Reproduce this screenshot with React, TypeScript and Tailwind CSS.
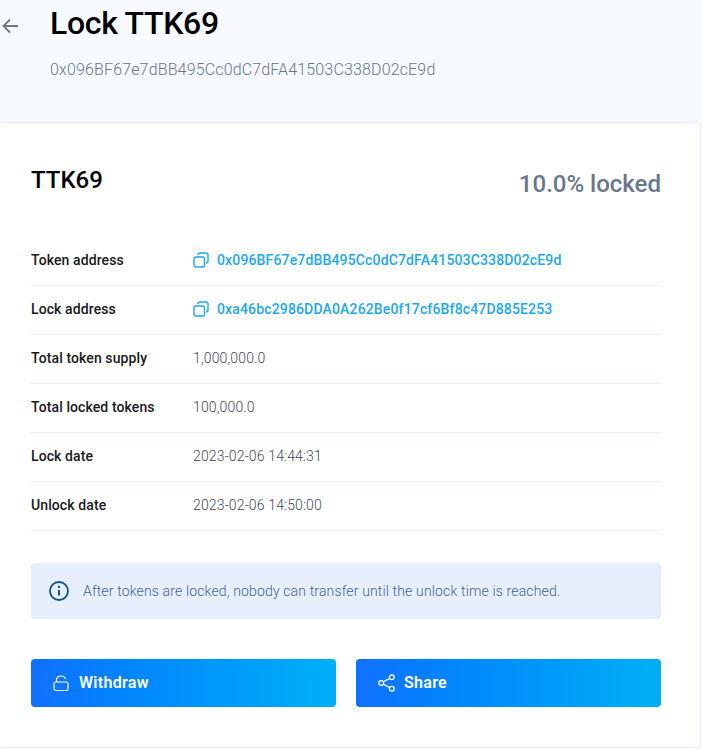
const rows = [
  { label: "Token address", value: "0x096BF67e7dBB495Cc0dC7dFA41503C338D02cE9d", link: true },
  { label: "Lock address", value: "0xa46bc2986DDA0A262Be0f17cf6Bf8c47D885E253", link: true },
  { label: "Total token supply", value: "1,000,000.0" },
  { label: "Total locked tokens", value: "100,000.0" },
  { label: "Lock date", value: "2023-02-06 14:44:31" },
  { label: "Unlock date", value: "2023-02-06 14:50:00" },
];

function CopyIcon() {
  return (
    <svg width="16" height="16" viewBox="0 0 16 16" fill="none" stroke="#1ea7f5" strokeWidth="1.4" className="mr-2 shrink-0">
      <rect x="1" y="5" width="10.500" height="10" rx="2" />
      <path d="M5 3C5 1.800 5.800 1 7 1h6c1.200 0 2 .8 2 2v6c0 1.200-.8 2-2 2" />
    </svg>
  );
}

export default function App() {
  return (
    <div className="h-[749px] w-[702px] overflow-hidden bg-[#f7faff] font-['Roboto',sans-serif]">
      <div className="relative h-[122px] pl-[50px]">
        <svg
          width="18"
          height="16"
          viewBox="0 0 18 16"
          fill="none"
          stroke="#6f7680"
          strokeWidth="1.8"
          className="absolute left-[1px] top-[18px]"
        >
          <path d="M17 8H2.500M9 1.500 2.500 8 9 14.500" />
        </svg>
        <h1 className="text-[32px] leading-[47px] font-medium tracking-[-0.3px] text-black">Lock TTK69</h1>
        <p className="mt-[11px] text-base leading-6 font-light tracking-[0.15px] text-[#68778c]">
          0x096BF67e7dBB495Cc0dC7dFA41503C338D02cE9d
        </p>
      </div>

      <div className="mr-px h-[626px] rounded border border-l-0 border-[#e6eefc] bg-white pt-[41px] pr-[39px] pl-[31px]">
        <div className="flex items-start justify-between">
          <h2 className="text-2xl leading-8 font-medium text-black">TTK69</h2>
          <span className="mt-1 text-2xl leading-8 font-medium text-[#68778c]">10.0% locked</span>
        </div>

        <div className="mt-[37px]">
          {rows.map((row) => (
            <div key={row.label} className="flex h-[49px] items-center border-b border-[#e6eefc] pb-[2px] text-sm tracking-[0.15px]">
              <span className="w-[162px] font-medium tracking-[0.1px] text-[#1a1a1a]">{row.label}</span>
              {row.link ? (
                <span className="flex items-center font-medium text-[#1ea7f5]">
                  <CopyIcon />
                  {row.value}
                </span>
              ) : (
                <span className="font-light text-[#3f4a5a]">{row.value}</span>
              )}
            </div>
          ))}
        </div>

        <div className="mt-[32px] flex h-14 items-center gap-[14px] rounded bg-[#e7eefc] pb-px pl-[18px] text-sm font-light tracking-[0.15px] text-[#3d6796]">
          <svg width="20" height="20" viewBox="0 0 20 20" fill="none" className="shrink-0">
            <circle cx="10" cy="10" r="9" stroke="#0b5592" strokeWidth="1.8" />
            <circle cx="10" cy="6" r="1.200" fill="#0b5592" />
            <path d="M10 9v5.500" stroke="#0b5592" strokeWidth="2" />
          </svg>
          After tokens are locked, nobody can transfer until the unlock time is reached.
        </div>

        <div className="mt-10 grid grid-cols-2 gap-5">
          <button className="flex h-12 items-center gap-[10px] rounded bg-gradient-to-r from-[#1170ff] to-[#00aff5] pl-[22px] text-base font-semibold tracking-[0.3px] text-white">
            <svg width="16" height="16" viewBox="0 0 16 16" fill="none" stroke="white" strokeWidth="1.2">
              <rect x="1" y="7" width="14" height="8.500" rx="2" />
              <path d="M3.500 7V5C3.500 2.500 5.500 1 8 1c2.200 0 4 1.200 4.500 3.200" />
            </svg>
            Withdraw
          </button>
          <button className="flex h-12 items-center gap-[9px] rounded bg-gradient-to-r from-[#1170ff] to-[#00aff5] pl-[22px] text-base font-semibold tracking-[0.3px] text-white">
            <svg width="17" height="18" viewBox="0 0 17 18" fill="none" stroke="white" strokeWidth="1.3">
              <circle cx="3.200" cy="9" r="2.400" />
              <circle cx="13.800" cy="3.200" r="2.400" />
              <circle cx="13.800" cy="14.800" r="2.400" />
              <path d="M5.300 7.800 11.700 4.400M5.300 10.200l6.400 3.400" />
            </svg>
            Share
          </button>
        </div>
      </div>
    </div>
  );
}
